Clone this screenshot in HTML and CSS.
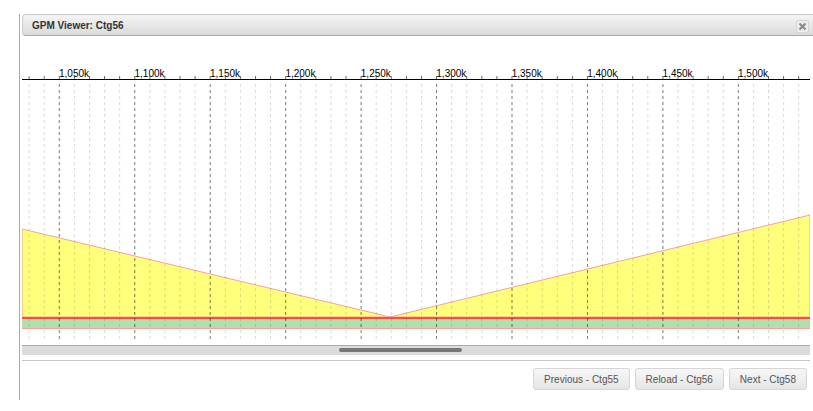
FILE: index.html
```html
<!DOCTYPE html>
<html>
<head>
<meta charset="utf-8">
<title>GPM Viewer</title>
<link rel="stylesheet" href="styles.css">
</head>
<body>
<div class="dialog">
  <div class="titlebar">
    <span class="title">GPM Viewer: Ctg56</span>
    <button class="close" aria-label="close">
      <svg width="7" height="7" viewBox="0 0 7 7"><path d="M0.5 0.5 L6.5 6.5 M6.5 0.5 L0.5 6.5" stroke="#888" stroke-width="2"/></svg>
    </button>
  </div>
  <div class="content">
    <svg class="chart" width="788" height="309" viewBox="0 0 788 309">
      <defs>
        <pattern id="minor" patternUnits="userSpaceOnUse" x="6.62" y="0" width="15.09" height="6">
          <rect x="0" y="0" width="1" height="3" fill="rgba(0,0,0,0.14)"/>
        </pattern>
        <pattern id="major" patternUnits="userSpaceOnUse" x="36.8" y="0" width="75.45" height="6">
          <rect x="0" y="0" width="1" height="3" fill="rgba(0,0,0,0.42)"/>
        </pattern>
        <pattern id="tick" patternUnits="userSpaceOnUse" x="6.62" y="0" width="15.09" height="309">
          <rect x="0" y="40" width="1" height="3" fill="#666"/>
        </pattern>
      </defs>
      <polygon points="0,193 368,281 788,179 788,281 0,281" fill="#ffff7c" stroke="#f7a1a1" stroke-width="1"/>
      <rect x="0" y="281" width="788" height="2" fill="#ff4a4a"/>
      <rect x="0" y="283" width="788" height="9" fill="#b1e0ad"/>
      <rect x="0" y="292" width="788" height="1" fill="#f7a1a1"/>
      <rect x="0" y="45" width="788" height="258" fill="url(#minor)"/>
      <rect x="0" y="45" width="788" height="258" fill="url(#major)"/>
      <rect x="0" y="0" width="788" height="44" fill="url(#tick)"/>
      <line x1="0" y1="43.5" x2="788" y2="43.5" stroke="#000" stroke-width="1"/>
      <g class="labels">
        <text x="37" y="41">1,050k</text>
        <text x="112.5" y="41">1,100k</text>
        <text x="188" y="41">1,150k</text>
        <text x="263.4" y="41">1,200k</text>
        <text x="338.8" y="41">1,250k</text>
        <text x="414.3" y="41">1,300k</text>
        <text x="489.7" y="41">1,350k</text>
        <text x="565.2" y="41">1,400k</text>
        <text x="640.6" y="41">1,450k</text>
        <text x="716" y="41">1,500k</text>
      </g>
    </svg>
    <div class="scrollbar"><div class="thumb"></div></div>
  </div>
  <div class="buttonpane">
    <button class="btn">Previous - Ctg55</button>
    <button class="btn">Reload - Ctg56</button>
    <button class="btn">Next - Ctg58</button>
  </div>
</div>
</body>
</html>
```
FILE: styles.css
```css
html, body {
  margin: 0;
  padding: 0;
  overflow: hidden;
  background: #fff;
  font-family: "Liberation Sans", Arial, sans-serif;
}

.dialog {
  margin: 14px 0 0 19px;
  width: 800px;
  height: 386px;
  border-left: 1px solid #aaa;
  padding-left: 2px;
}

.titlebar {
  box-sizing: border-box;
  width: 794px;
  height: 22px;
  display: flex;
  align-items: center;
  padding: 0 6px 0 9px;
  border: 1px solid #cbcbcb;
  border-bottom-color: #a9a9a9;
  border-radius: 4px;
  background: linear-gradient(#f5f5f5, #dadada);
}

.title {
  font-size: 10px;
  font-weight: bold;
  color: #333;
}

.close {
  margin-left: auto;
  margin-top: 3px;
  width: 13px;
  height: 13px;
  padding: 0;
  border: 1px solid #d6d6d6;
  border-radius: 2px;
  background: #ececec;
  display: flex;
  align-items: center;
  justify-content: center;
}

.content {
  width: 788px;
}

.chart {
  display: block;
}

.labels text {
  font-family: "Liberation Sans", Arial, sans-serif;
  font-size: 10px;
  fill: #000;
}

.scrollbar {
  box-sizing: border-box;
  height: 10px;
  border-top: 1px solid #aaa;
  background: #dcdcdc;
  padding-top: 2px;
}

.thumb {
  margin-left: 317px;
  width: 123px;
  height: 4px;
  border-radius: 2px;
  background: #777;
}

.buttonpane {
  box-sizing: border-box;
  width: 788px;
  margin-top: 5px;
  border-top: 1px solid #c8c8c8;
  padding: 7px 3px 0 0;
  display: flex;
  justify-content: flex-end;
  gap: 5px;
}

.btn {
  box-sizing: border-box;
  height: 22px;
  padding: 0 10px;
  font-family: "Liberation Sans", Arial, sans-serif;
  font-size: 10px;
  color: #555;
  border: 1px solid #d5d5d5;
  border-radius: 3px;
  background: linear-gradient(#f7f7f7, #e5e5e5);
}
```
